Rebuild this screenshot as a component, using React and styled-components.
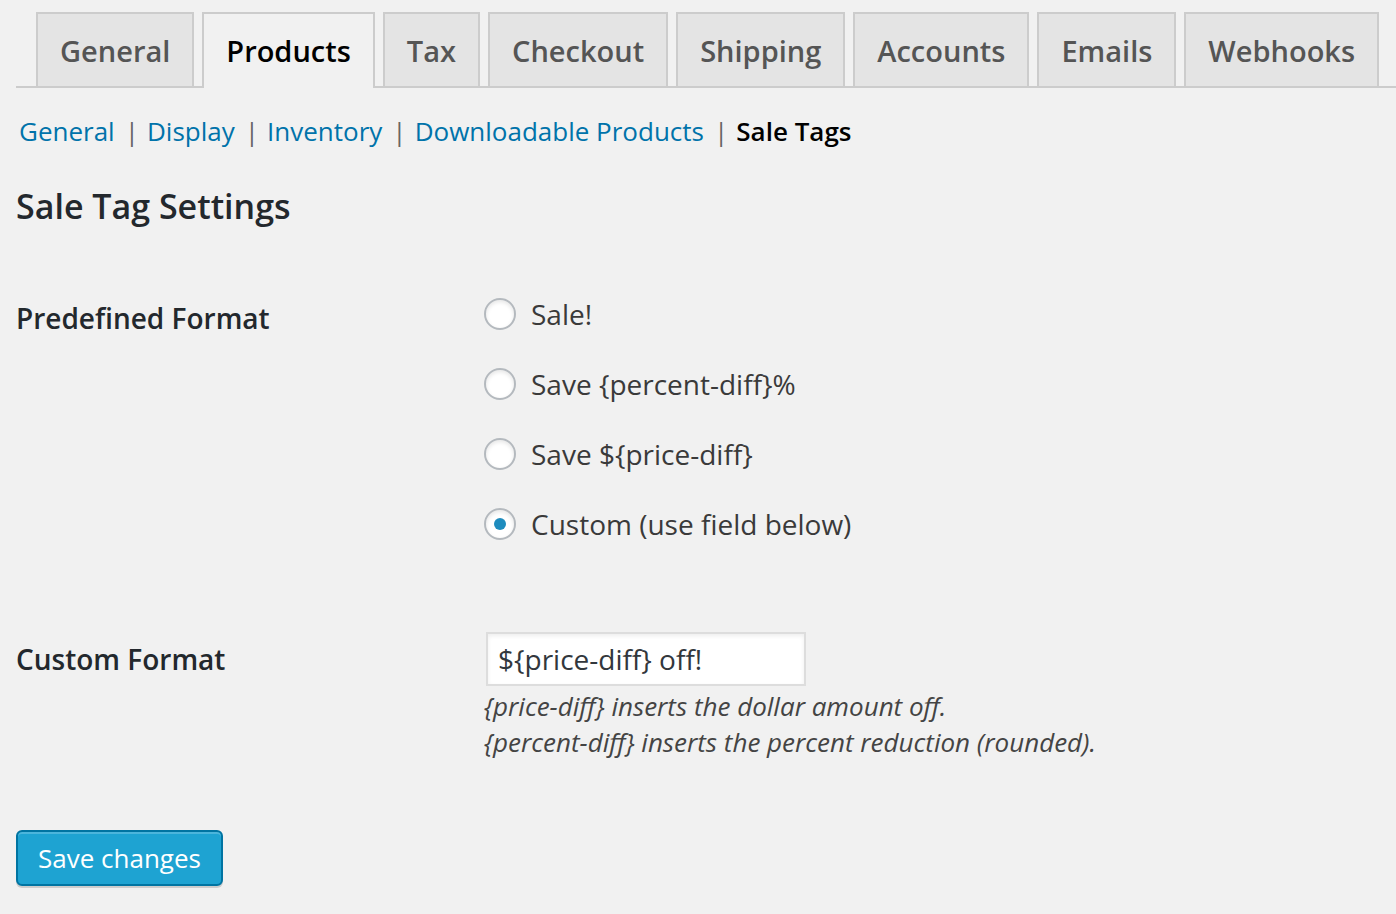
import React, { useState } from "react";
import styled, { createGlobalStyle } from "styled-components";

const GlobalStyle = createGlobalStyle`
  html, body {
    margin: 0;
    padding: 0;
    background: #f1f1f1;
  }
  body {
    font-family: "Open Sans", "Liberation Sans", sans-serif;
    color: #444;
  }
`;

const tabs = ["General", "Products", "Tax", "Checkout", "Shipping", "Accounts", "Emails", "Webhooks"];
const sections = ["General", "Display", "Inventory", "Downloadable Products", "Sale Tags"];
const formats = ["Sale!", "Save {percent-diff}%", "Save ${price-diff}", "Custom (use field below)"];

const App = () => {
  const [format, setFormat] = useState(3);
  const [custom, setCustom] = useState("${price-diff} off!");

  return (
    <Wrapper>
      <GlobalStyle />
      <TabBar>
        {tabs.map((t) => (
          <Tab key={t} $active={t === "Products"}>
            {t}
          </Tab>
        ))}
      </TabBar>

      <SubNav>
        {sections.map((s, i) => (
          <li key={s}>
            {s === "Sale Tags" ? <Current>{s}</Current> : <SubLink href="#">{s}</SubLink>}
            {i < sections.length - 1 && <Sep>|</Sep>}
          </li>
        ))}
      </SubNav>

      <Heading>Sale Tag Settings</Heading>

      <FormTable>
        <FieldLabel $pad={19}>Predefined Format</FieldLabel>
        <RadioList>
          {formats.map((f, i) => (
            <RadioRow key={f} onClick={() => setFormat(i)}>
              <Radio $checked={format === i} />
              <span>{f}</span>
            </RadioRow>
          ))}
        </RadioList>

        <FieldLabel $pad={0} $lh={54} $top={73}>
          Custom Format
        </FieldLabel>
        <Field $top={73}>
          <TextInput value={custom} onChange={(e) => setCustom(e.target.value)} />
          <Description>
            {"{price-diff} inserts the dollar amount off."}
            <br />
            {"{percent-diff} inserts the percent reduction (rounded)."}
          </Description>
        </Field>
      </FormTable>

      <SaveButton>Save changes</SaveButton>
    </Wrapper>
  );
};

const Wrapper = styled.div`
  padding: 12px 0 40px 16px;
  min-height: 914px;
  box-sizing: border-box;
`;

const TabBar = styled.div`
  display: flex;
  gap: 8px;
  padding-left: 20px;
  border-bottom: 2px solid #ccc;
`;

const Tab = styled.a`
  display: flex;
  align-items: center;
  height: 72px;
  padding: 0 22px;
  border: 2px solid #ccc;
  border-bottom: none;
  margin-bottom: ${(p) => (p.$active ? "-2px" : "0")};
  padding-bottom: ${(p) => (p.$active ? "2px" : "0")};
  background: ${(p) => (p.$active ? "#f1f1f1" : "#e4e4e4")};
  color: ${(p) => (p.$active ? "#000" : "#555")};
  font-size: 29px;
  font-weight: 600;
  cursor: pointer;
`;

const SubNav = styled.ul`
  display: flex;
  list-style: none;
  margin: 25px 0 0 3px;
  padding: 0;
  font-size: 26px;
  line-height: 36px;
  li {
    white-space: pre;
  }
`;

const SubLink = styled.a`
  color: #0073aa;
  text-decoration: none;
`;

const Current = styled.span`
  color: #000;
  font-weight: 600;
`;

const Sep = styled.span`
  color: #666;
  margin: 0 8px 0 10px;
`;

const Heading = styled.h2`
  margin: 33px 0 0;
  font-size: 34px;
  line-height: 48px;
  font-weight: 600;
  color: #23282d;
`;

const FormTable = styled.div`
  display: grid;
  grid-template-columns: 468px 1fr;
  margin-top: 49px;
`;

const FieldLabel = styled.div`
  padding-top: ${(p) => p.$pad}px;
  margin-top: ${(p) => p.$top || 0}px;
  font-size: 28px;
  line-height: ${(p) => p.$lh || 40}px;
  font-weight: 600;
  color: #23282d;
`;

const RadioList = styled.div`
  display: flex;
  flex-direction: column;
`;

const RadioRow = styled.label`
  display: flex;
  align-items: center;
  gap: 15px;
  height: 70px;
  font-size: 28px;
  line-height: 40px;
  color: #3a3a3a;
  cursor: pointer;
`;

const Radio = styled.span`
  position: relative;
  width: 32px;
  height: 32px;
  box-sizing: border-box;
  border-radius: 50%;
  border: 2px solid #b4b9be;
  background: #fff;
  box-shadow: inset 0 2px 4px rgba(0, 0, 0, 0.1);
  flex-shrink: 0;
  &::after {
    content: "";
    display: ${(p) => (p.$checked ? "block" : "none")};
    position: absolute;
    left: 8px;
    top: 8px;
    width: 12px;
    height: 12px;
    border-radius: 50%;
    background: #1e8cbe;
  }
`;

const Field = styled.div`
  margin-top: ${(p) => p.$top}px;
`;

const TextInput = styled.input`
  display: block;
  width: 320px;
  height: 54px;
  margin-left: 2px;
  box-sizing: border-box;
  padding: 0 10px;
  border: 2px solid #ddd;
  background: #fff;
  box-shadow: inset 0 2px 4px rgba(0, 0, 0, 0.07);
  font-family: "Open Sans", "Liberation Sans", sans-serif;
  font-size: 28px;
  color: #32373c;
  outline: none;
`;

const Description = styled.p`
  margin: 2px 0 0;
  font-size: 26px;
  line-height: 36px;
  font-style: italic;
  color: #444;
`;

const SaveButton = styled.button`
  display: block;
  margin-top: 70px;
  height: 56px;
  padding: 0 20px;
  border: 2px solid #0074a2;
  border-radius: 6px;
  background: #1ea3d2;
  box-shadow: inset 0 2px 0 rgba(120, 200, 230, 0.5), 0 2px 0 rgba(0, 0, 0, 0.15);
  font-family: "Open Sans", "Liberation Sans", sans-serif;
  font-size: 26px;
  color: #fff;
  cursor: pointer;
`;

export default App;
